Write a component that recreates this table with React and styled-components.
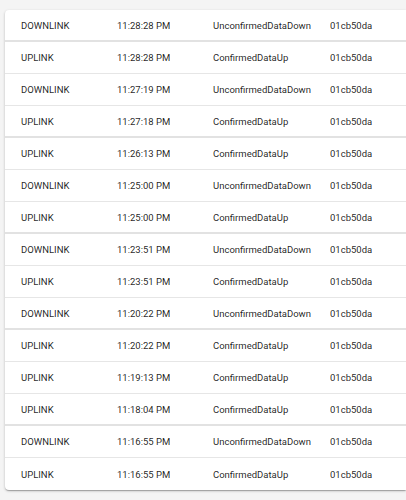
import React from "react";
import styled, { createGlobalStyle } from "styled-components";

const Global = createGlobalStyle`
  html, body { margin: 0; padding: 0; background: #f4f4f4; }
  body { font-family: Roboto, "Noto Sans", sans-serif; }
`;

const Page = styled.div`
  padding: 10px 0 12px 5px;
`;

const Card = styled.div`
  background: #fff;
  border-radius: 4px 0 0 4px;
  box-shadow: 0 1px 3px rgba(0,0,0,0.2), 0 1px 1px rgba(0,0,0,0.14), 0 2px 1px -1px rgba(0,0,0,0.12);
  overflow: hidden;
`;

const Row = styled.div`
  display: grid;
  grid-template-columns: 96px 96px 117px 1fr;
  align-items: center;
  height: ${(p) => (p.$strong ? 30 : 31)}px;
  padding-left: 16px;
  border-bottom: ${(p) => (p.$strong ? "2px solid #e2e2e2" : "1px solid #e6e6e6")};
  &:last-child { border-bottom: none; height: 32px; }
`;

const Cell = styled.div`
  font-size: 9.5px;
  color: rgba(0,0,0,0.87);
  white-space: nowrap;
`;

const rows = [
  ["DOWNLINK", "11:28:28 PM", "UnconfirmedDataDown"],
  ["UPLINK", "11:28:28 PM", "ConfirmedDataUp"],
  ["DOWNLINK", "11:27:19 PM", "UnconfirmedDataDown"],
  ["UPLINK", "11:27:18 PM", "ConfirmedDataUp"],
  ["UPLINK", "11:26:13 PM", "ConfirmedDataUp"],
  ["DOWNLINK", "11:25:00 PM", "UnconfirmedDataDown"],
  ["UPLINK", "11:25:00 PM", "ConfirmedDataUp"],
  ["DOWNLINK", "11:23:51 PM", "UnconfirmedDataDown"],
  ["UPLINK", "11:23:51 PM", "ConfirmedDataUp"],
  ["DOWNLINK", "11:20:22 PM", "UnconfirmedDataDown"],
  ["UPLINK", "11:20:22 PM", "ConfirmedDataUp"],
  ["UPLINK", "11:19:13 PM", "ConfirmedDataUp"],
  ["UPLINK", "11:18:04 PM", "ConfirmedDataUp"],
  ["DOWNLINK", "11:16:55 PM", "UnconfirmedDataDown"],
  ["UPLINK", "11:16:55 PM", "ConfirmedDataUp"],
];

export default function App() {
  return (
    <>
      <Global />
      <Page>
        <Card>
          {rows.map(([dir, time, type], i) => (
            <Row key={i} $strong={i % 3 === 0}>
              <Cell>{dir}</Cell>
              <Cell>{time}</Cell>
              <Cell>{type}</Cell>
              <Cell>01cb50da</Cell>
            </Row>
          ))}
        </Card>
      </Page>
    </>
  );
}
